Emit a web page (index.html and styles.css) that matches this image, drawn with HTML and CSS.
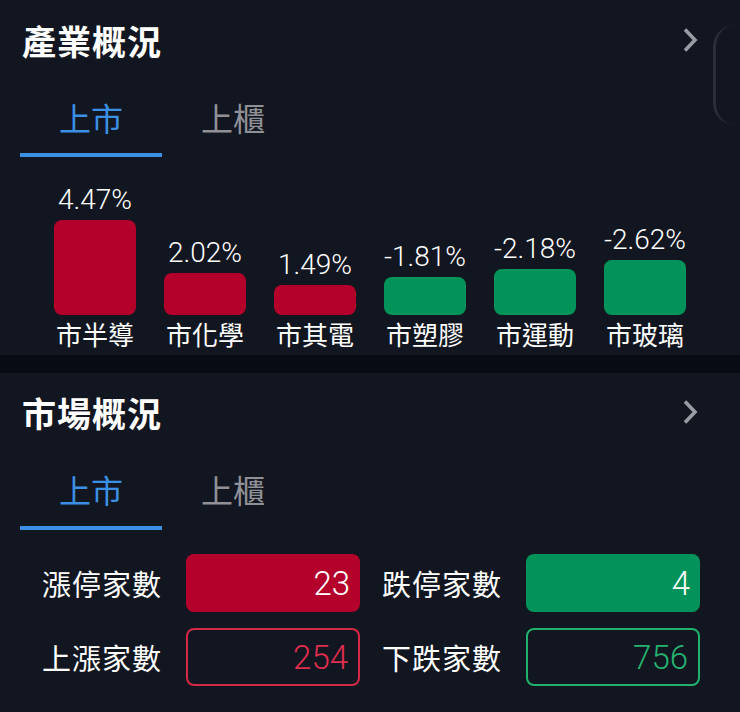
FILE: index.html
```html
<!DOCTYPE html>
<html lang="zh-Hant">
<head>
    <meta charset="UTF-8">
    <meta name="viewport" content="width=device-width, initial-scale=1.0">
    <title>市場概況</title>
    <link rel="stylesheet" href="styles.css">
</head>
<body>
    <section class="panel industry">
        <div class="panel-head">
            <h2>產業概況</h2>
            <svg class="chevron" viewBox="0 0 16 26"><path d="M3 2.5 L13 13 L3 23.5" fill="none" stroke="#9a9ca4" stroke-width="3.6"/></svg>
        </div>
        <div class="tabs">
            <div class="tab active">上市</div>
            <div class="tab">上櫃</div>
        </div>
        <div class="bars">
            <div class="bar-item">
                <span class="pct">4.47%</span>
                <div class="bar up" style="height: 95px"></div>
                <span class="name">市半導</span>
            </div>
            <div class="bar-item">
                <span class="pct">2.02%</span>
                <div class="bar up" style="height: 42px"></div>
                <span class="name">市化學</span>
            </div>
            <div class="bar-item">
                <span class="pct">1.49%</span>
                <div class="bar up" style="height: 30px"></div>
                <span class="name">市其電</span>
            </div>
            <div class="bar-item">
                <span class="pct">-1.81%</span>
                <div class="bar down" style="height: 38px"></div>
                <span class="name">市塑膠</span>
            </div>
            <div class="bar-item">
                <span class="pct">-2.18%</span>
                <div class="bar down" style="height: 46px"></div>
                <span class="name">市運動</span>
            </div>
            <div class="bar-item">
                <span class="pct">-2.62%</span>
                <div class="bar down" style="height: 55px"></div>
                <span class="name">市玻璃</span>
            </div>
        </div>
        <div class="scroll-edge"></div>
    </section>

    <div class="divider"></div>

    <section class="panel market">
        <div class="panel-head">
            <h2>市場概況</h2>
            <svg class="chevron" viewBox="0 0 16 26"><path d="M3 2.5 L13 13 L3 23.5" fill="none" stroke="#9a9ca4" stroke-width="3.6"/></svg>
        </div>
        <div class="tabs">
            <div class="tab active">上市</div>
            <div class="tab">上櫃</div>
        </div>
        <div class="stats">
            <div class="stat">
                <span class="label">漲停家數</span>
                <span class="box fill-up">23</span>
            </div>
            <div class="stat">
                <span class="label">跌停家數</span>
                <span class="box fill-down">4</span>
            </div>
            <div class="stat">
                <span class="label">上漲家數</span>
                <span class="box line-up">254</span>
            </div>
            <div class="stat">
                <span class="label">下跌家數</span>
                <span class="box line-down">756</span>
            </div>
        </div>
    </section>
</body>
</html>
```

FILE: styles.css
```css
* {
    box-sizing: border-box;
}

body {
    margin: 0;
    background-color: #121620;
    color: #ffffff;
    font-family: "Noto Sans CJK TC", "Noto Sans", sans-serif;
    width: 740px;
    height: 712px;
    overflow: hidden;
}

.panel {
    position: relative;
    padding: 0 20px;
}

.industry {
    height: 355px;
}

.divider {
    height: 18px;
    background-color: #080b13;
}

.panel-head {
    height: 80px;
    display: flex;
    align-items: center;
    justify-content: space-between;
    padding: 0 22px 0 2px;
}

.panel-head h2 {
    margin: 0;
    font-size: 34px;
    font-weight: 700;
    letter-spacing: 1px;
}

.chevron {
    width: 16px;
    height: 26px;
}

.tabs {
    display: flex;
    height: 77px;
}

.tab {
    width: 142px;
    display: flex;
    align-items: center;
    justify-content: center;
    font-size: 32px;
    color: #8f9197;
    padding-bottom: 4px;
}

.tab.active {
    color: #3b90e4;
    border-bottom: 4px solid #3b90e4;
    padding-bottom: 0;
}

.market .tabs {
    height: 79px;
}

.market .panel-head {
    height: 78px;
}

/* 柱狀圖 */
.bars {
    display: grid;
    grid-template-columns: repeat(6, 110px);
    padding: 0 0 0 20px;
    margin-top: 26px;
    height: 170px;
    align-items: end;
}

.bar-item {
    display: flex;
    flex-direction: column;
    align-items: center;
}

.pct {
    font-family: Roboto, "Liberation Sans", sans-serif;
    font-size: 28px;
    font-weight: 300;
    line-height: 30px;
    margin-bottom: 5px;
}

.bar {
    width: 82px;
    border-radius: 8px;
}

.bar.up {
    background-color: #b3012b;
}

.bar.down {
    background-color: #01935a;
}

.name {
    font-size: 26px;
    line-height: 38px;
}

.scroll-edge {
    position: absolute;
    top: 25px;
    right: 5px;
    width: 22px;
    height: 100px;
    border-left: 3px solid #2a2e38;
    border-radius: 22px 0 0 22px;
}

/* 家數統計 */
.stats {
    display: grid;
    grid-template-columns: 318px 318px;
    column-gap: 22px;
    row-gap: 16px;
    padding-left: 22px;
    margin-top: 24px;
}

.stat {
    display: flex;
    align-items: center;
}

.label {
    flex: 1;
    font-size: 29px;
    letter-spacing: 1px;
}

.box {
    width: 174px;
    height: 58px;
    border-radius: 8px;
    display: flex;
    align-items: center;
    justify-content: flex-end;
    padding-right: 10px;
    font-family: Roboto, "Liberation Sans", sans-serif;
    font-size: 33px;
    font-weight: 300;
}

.fill-up {
    background-color: #b3012b;
}

.fill-down {
    background-color: #01935a;
}

.line-up {
    border: 2px solid #d32947;
    color: #e12d4f;
}

.line-down {
    border: 2px solid #22b06d;
    color: #25b371;
}
```
